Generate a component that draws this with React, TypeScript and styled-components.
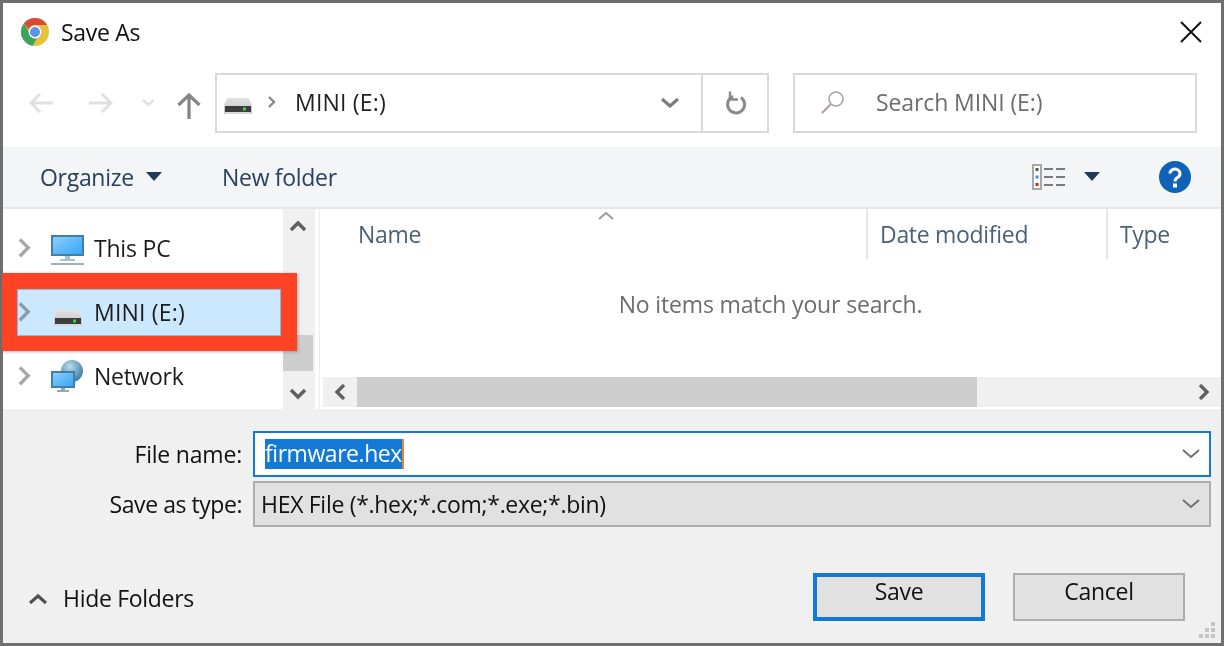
import React from "react";
import styled, { createGlobalStyle } from "styled-components";

const GlobalStyle = createGlobalStyle`
    html, body {
        margin: 0;
        padding: 0;
        background: #fff;
    }
    body {
        font-family: "Open Sans", "Liberation Sans", sans-serif;
    }
`;

const Window = styled.div`
    position: relative;
    box-sizing: border-box;
    width: 1224px;
    height: 646px;
    border: 3px solid #6f6f6f;
    background: #f0f0f0;
    display: flex;
    flex-direction: column;
    font-size: 23px;
    filter: blur(0.35px);
`;

const TitleBar = styled.div`
    height: 57px;
    flex: none;
    background: #fff;
    display: flex;
    align-items: center;
    padding: 0 19px 0 18px;
    gap: 12px;
`;

const Title = styled.div`
    flex: 1;
    color: #111;
    letter-spacing: -0.3px;
`;

const AddressRow = styled.div`
    height: 87px;
    flex: none;
    box-sizing: border-box;
    background: #fff;
    display: flex;
    align-items: flex-start;
    padding: 13px 24px 0 26px;
`;

const NavButtons = styled.div`
    width: 186px;
    height: 60px;
    flex: none;
    display: flex;
    align-items: center;
`;

const NavIcon = styled.svg<{ $gap: number; $drop?: number }>`
    flex: none;
    margin-right: ${(p) => p.$gap}px;
    margin-top: ${(p) => p.$drop ?? 0}px;
`;

const AddressBox = styled.div`
    box-sizing: border-box;
    width: 554px;
    height: 60px;
    flex: none;
    border: 2px solid #d9d9d9;
    display: flex;
    align-items: center;
    padding-left: 7px;
`;

const Crumb = styled.div`
    flex: 1;
    display: flex;
    align-items: center;
    color: #222;
    letter-spacing: 0.2px;
    padding-bottom: 2px;
`;

const CrumbDrive = styled.div`
    display: flex;
    margin-top: 8px;
`;

const CrumbChevron = styled.svg`
    margin: 0 18px 0 15px;
`;

const DropButton = styled.div`
    width: 62px;
    align-self: stretch;
    box-sizing: border-box;
    display: flex;
    align-items: center;
    justify-content: center;
`;

const RefreshButton = styled.div`
    width: 66px;
    align-self: stretch;
    box-sizing: border-box;
    border-left: 2px solid #d9d9d9;
    padding-left: 2px;
    display: flex;
    align-items: center;
    justify-content: center;
`;

const SearchBox = styled.div`
    box-sizing: border-box;
    width: 404px;
    height: 60px;
    flex: none;
    margin-left: 24px;
    border: 2px solid #d9d9d9;
    display: flex;
    align-items: center;
    gap: 31px;
    padding: 0 0 2px 26px;
    color: #6d6d6d;
    letter-spacing: -0.1px;
`;

const Toolbar = styled.div`
    height: 62px;
    flex: none;
    box-sizing: border-box;
    background: #f4f5f7;
    border-bottom: 2px solid #e6e6e6;
    display: flex;
    align-items: center;
    padding: 0 30px 1px 37px;
    color: #2a4060;
    letter-spacing: -0.3px;
`;

const ToolbarItem = styled.div<{ $width: number }>`
    width: ${(p) => p.$width}px;
    flex: none;
    display: flex;
    align-items: center;
    gap: 12px;
`;

const Spacer = styled.div`
    flex: 1;
`;

const ViewIcon = styled.svg`
    margin-right: 18px;
`;

const HelpIcon = styled.svg`
    margin-left: 59px;
`;

const Browser = styled.div`
    height: 200px;
    flex: none;
    display: flex;
    background: #fff;
`;

const NavPane = styled.div`
    width: 280px;
    flex: none;
    box-sizing: border-box;
    padding-top: 7px;
    display: flex;
    flex-direction: column;
`;

const NavRow = styled.div<{ $selected?: boolean }>`
    height: 64px;
    flex: none;
    box-sizing: border-box;
    display: flex;
    align-items: center;
    padding-left: 14px;
    color: #1c1c1c;
    background: ${(p) => (p.$selected ? "#cce8ff" : "transparent")};
`;

const NavChevron = styled.svg`
    flex: none;
    margin-right: 20px;
`;

const NavIconSlot = styled.div<{ $drop?: number }>`
    width: 33px;
    flex: none;
    display: flex;
    justify-content: center;
    margin-top: ${(p) => p.$drop ?? 0}px;
`;

const NavLabel = styled.span<{ $spacing?: number }>`
    margin-left: 10px;
    letter-spacing: ${(p) => p.$spacing ?? -0.2}px;
`;

const NavScroll = styled.div`
    width: 32px;
    flex: none;
    background: #f0f0f0;
    display: flex;
    flex-direction: column;
    align-items: center;
    justify-content: space-between;
    position: relative;
    padding: 11px 2px 9px 0;
    box-sizing: border-box;
`;

const NavThumb = styled.div`
    position: absolute;
    top: 126px;
    left: 0;
    width: 30px;
    height: 36px;
    background: #cdcdcd;
`;

const Splitter = styled.div`
    width: 5px;
    flex: none;
    box-sizing: border-box;
    border-right: 1px solid #ececec;
`;

const ListPane = styled.div`
    flex: 1;
    min-width: 0;
    display: flex;
    flex-direction: column;
    padding-left: 3px;
`;

const HeaderRow = styled.div`
    height: 50px;
    flex: none;
    display: flex;
    position: relative;
    color: #4c607a;
    letter-spacing: -0.3px;
    overflow: hidden;
`;

const SortCaret = styled.svg`
    position: absolute;
    left: 275px;
    top: 2px;
`;

const HeaderCell = styled.div<{ $width: number; $first?: boolean; $last?: boolean }>`
    width: ${(p) => p.$width}px;
    flex: none;
    box-sizing: border-box;
    padding-left: ${(p) => (p.$first ? 35 : 12)}px;
    padding-top: 9px;
    border-right: ${(p) => (p.$last ? "none" : "2px solid #e5e5e5")};
`;

const EmptyText = styled.div`
    flex: 1;
    text-align: center;
    color: #6d6d6d;
    padding-top: 29px;
    padding-right: 3px;
    letter-spacing: -0.15px;
`;

const HScroll = styled.div`
    height: 30px;
    flex: none;
    margin-bottom: 2px;
    background: #f0f0f0;
    display: flex;
    align-items: center;
`;

const HButton = styled.div`
    width: 34px;
    flex: none;
    display: flex;
    align-items: center;
    justify-content: center;
`;

const HThumb = styled.div`
    width: 620px;
    height: 30px;
    flex: none;
    background: #cdcdcd;
`;

const HTrack = styled.div`
    flex: 1;
`;

const Highlight = styled.div`
    position: absolute;
    left: -1px;
    top: 270px;
    width: 295px;
    height: 78px;
    box-sizing: border-box;
    border-style: solid;
    border-color: #ff4324;
    border-width: 16px 16px 15px 15px;
    box-shadow: 1px 1px 3px rgba(0, 0, 0, 0.25);

    &::after {
        content: "";
        position: absolute;
        inset: 0;
        border: 1px solid #8ab9e2;
    }
`;

const Form = styled.div`
    flex: 1;
    display: flex;
    flex-direction: column;
    padding: 22px 10px 0 0;
`;

const FieldRow = styled.div`
    display: flex;
    align-items: center;
    margin-bottom: 4px;
    color: #111;
    letter-spacing: -0.3px;
`;

const FieldLabel = styled.div<{ $spacing?: number }>`
    width: 239px;
    flex: none;
    text-align: right;
    margin-right: 11px;
    letter-spacing: ${(p) => p.$spacing ?? -0.2}px;
`;

const Field = styled.div<{ $active?: boolean }>`
    flex: 1;
    box-sizing: border-box;
    height: 46px;
    display: flex;
    align-items: center;
    justify-content: space-between;
    padding: 0 9px 0 ${(p) => (p.$active ? 10 : 6)}px;
    border: 2px solid ${(p) => (p.$active ? "#1279d6" : "#adadad")};
    background: ${(p) => (p.$active ? "#fff" : "#e1e1e1")};
`;

const SelectedText = styled.span`
    background: #1279d6;
    color: #fff;
    height: 30px;
    line-height: 29px;
    letter-spacing: -0.45px;
    border-right: 2px solid #f08030;
`;

const Footer = styled.div`
    display: flex;
    align-items: center;
    margin-top: 42px;
    padding-left: 26px;
    padding-right: 26px;
`;

const HideFolders = styled.div`
    flex: 1;
    display: flex;
    align-items: center;
    gap: 16px;
    padding-top: 2px;
    color: #111;
    letter-spacing: -0.3px;
`;

const Button = styled.div<{ $primary?: boolean }>`
    box-sizing: border-box;
    width: 172px;
    height: 48px;
    margin-left: 28px;
    display: flex;
    align-items: center;
    justify-content: center;
    padding-bottom: 12px;
    background: #e1e1e1;
    color: #111;
    letter-spacing: -0.3px;
    border: ${(p) => (p.$primary ? "4px solid #1279d6" : "2px solid #adadad")};
`;

const Grip = styled.svg`
    position: absolute;
    right: 6px;
    bottom: 5px;
`;

const ChromeIcon = () => (
    <svg width="28" height="28" viewBox="0 0 28 28">
        <circle cx="14" cy="14" r="14" fill="#e2c33a" />
        <path d="M14 0a14 14 0 0 1 12.1 7H14a7 7 0 0 0-6.400 4.200L2.900 5.500A14 14 0 0 1 14 0z" fill="#d8493c" />
        <path d="M2.900 5.500l5.600 9.600a6.800 6.800 0 0 0 7.300 5.600L11.500 27.800A14 14 0 0 1 2.900 5.500z" fill="#3ba45c" />
        <circle cx="14" cy="14" r="6.400" fill="#fff" />
        <circle cx="14" cy="14" r="5" fill="#5b92ea" />
    </svg>
);

const DriveIcon = () => (
    <svg width="28" height="16" viewBox="0 0 28 16">
        <defs>
            <linearGradient id="driveTop" x1="0" y1="0" x2="0" y2="1">
                <stop offset="0" stopColor="#e2e2e2" />
                <stop offset="1" stopColor="#c4c4c4" />
            </linearGradient>
        </defs>
        <path d="M5 0h18q1.500 0 2 1l3 6v9H0V7l3-6q.5-1 2-1z" fill="url(#driveTop)" />
        <rect x="1" y="8" width="26" height="6" fill="#3d3d3d" />
        <rect x="1" y="14" width="26" height="2" fill="#d9d9d9" />
        <rect x="19" y="9.500" width="3" height="3" fill="#3fd04a" />
    </svg>
);

const PcIcon = () => (
    <svg width="33" height="30" viewBox="0 0 33 30">
        <defs>
            <linearGradient id="pcScreen" x1="0" y1="0" x2="1" y2="1">
                <stop offset="0" stopColor="#8fd0fb" />
                <stop offset="1" stopColor="#34a4f5" />
            </linearGradient>
        </defs>
        <rect x="1" y="1" width="31" height="19" fill="url(#pcScreen)" stroke="#3f7fa8" strokeWidth="2" />
        <rect x="14" y="21" width="5" height="3" fill="#a8c0d0" />
        <rect x="9" y="24" width="15" height="2" fill="#a8c0d0" />
        <rect x="0" y="28" width="33" height="2" fill="#9fb0bd" />
    </svg>
);

const NetworkIcon = () => (
    <svg width="33" height="32" viewBox="0 0 33 32">
        <defs>
            <radialGradient id="globe" cx="0.4" cy="0.3" r="0.8">
                <stop offset="0" stopColor="#b9dcec" />
                <stop offset="1" stopColor="#2f6f96" />
            </radialGradient>
            <linearGradient id="netScreen" x1="0" y1="0" x2="1" y2="1">
                <stop offset="0" stopColor="#8fd0fb" />
                <stop offset="1" stopColor="#34a4f5" />
            </linearGradient>
        </defs>
        <circle cx="21" cy="11" r="11" fill="url(#globe)" />
        <rect x="1" y="12" width="22" height="15" fill="url(#netScreen)" stroke="#3f7fa8" strokeWidth="2" />
        <rect x="10" y="28" width="4" height="2" fill="#8fa8b8" />
        <rect x="6" y="30" width="12" height="2" fill="#8fa8b8" />
    </svg>
);

const Chevron = ({ color = "#a6a6a6" }: { color?: string }) => (
    <NavChevron width={14} height={19.6} viewBox="0 0 10 14">
        <path d="M2 1l6 6-6 6" fill="none" stroke={color} strokeWidth="2.4" />
    </NavChevron>
);

const DownChevron = () => (
    <svg width="18" height="10" viewBox="0 0 18 10">
        <path d="M1 1l8 7 8-7" fill="none" stroke="#707070" strokeWidth="2" />
    </svg>
);

const Caret = () => (
    <svg width="16" height="9" viewBox="0 0 16 9">
        <path d="M0 0h16l-8 9z" fill="#22395a" />
    </svg>
);

const ThickChevron = ({ dir }: { dir: "up" | "down" | "left" | "right" }) => {
    const paths = {
        up: "M1 10l7-7 7 7",
        down: "M1 2l7 7 7-7",
        left: "M10 1l-7 7 7 7",
        right: "M2 1l7 7-7 7",
    };
    const wide = dir === "up" || dir === "down";
    return (
        <svg width={wide ? 16 : 12} height={wide ? 12 : 16} viewBox={wide ? "0 0 16 12" : "0 0 12 16"}>
            <path d={paths[dir]} fill="none" stroke="#606060" strokeWidth="3.4" />
        </svg>
    );
};

const App = () => {
    return (
        <>
            <GlobalStyle />
            <Window>
                <TitleBar>
                    <ChromeIcon />
                    <Title>Save As</Title>
                    <svg width="22" height="22" viewBox="0 0 22 22">
                        <path d="M1 1l20 20M21 1L1 21" stroke="#111" strokeWidth="2" />
                    </svg>
                </TitleBar>
                <AddressRow>
                    <NavButtons>
                        <NavIcon $gap={36} width="24" height="20" viewBox="0 0 24 20">
                            <path d="M11 1l-9 9 9 9M2 10h22" fill="none" stroke="#e0e0e0" strokeWidth="3" />
                        </NavIcon>
                        <NavIcon $gap={29} width="24" height="20" viewBox="0 0 24 20">
                            <path d="M13 1l9 9-9 9M22 10H0" fill="none" stroke="#e0e0e0" strokeWidth="3" />
                        </NavIcon>
                        <NavIcon $gap={22} width="13" height="8" viewBox="0 0 13 8">
                            <path d="M1 1l5.500 5 5.500-5" fill="none" stroke="#e0e0e0" strokeWidth="2.4" />
                        </NavIcon>
                        <NavIcon $gap={0} $drop={5} width="24" height="26" viewBox="0 0 24 26">
                            <path d="M1.500 12L12 2l10.500 10M12 2v24" fill="none" stroke="#858585" strokeWidth="3.2" />
                        </NavIcon>
                    </NavButtons>
                    <AddressBox>
                        <Crumb>
                            <CrumbDrive><DriveIcon /></CrumbDrive>
                            <CrumbChevron width="10" height="12" viewBox="0 0 10 12">
                                <path d="M2 1l5 5-5 5" fill="none" stroke="#8a8a8a" strokeWidth="2.4" />
                            </CrumbChevron>
                            MINI (E:)
                        </Crumb>
                        <DropButton>
                            <svg width="18" height="10" viewBox="0 0 18 10">
                                <path d="M1 1l8 7 8-7" fill="none" stroke="#7b7b7b" strokeWidth="3.2" />
                            </svg>
                        </DropButton>
                        <RefreshButton>
                            <svg width="22" height="24" viewBox="0 0 22 24">
                                <path d="M8 5.500a8.500 8.500 0 1 0 8 1" fill="none" stroke="#8a8a8a" strokeWidth="3" />
                                <path d="M5 0.500v8h8" fill="none" stroke="#8a8a8a" strokeWidth="2.400" />
                            </svg>
                        </RefreshButton>
                    </AddressBox>
                    <SearchBox>
                        <svg width="24" height="24" viewBox="0 0 24 24">
                            <circle cx="15" cy="9" r="7" fill="none" stroke="#a9a4a8" strokeWidth="1.6" />
                            <path d="M10 14l-9 9" stroke="#b09aa8" strokeWidth="2" />
                        </svg>
                        Search MINI (E:)
                    </SearchBox>
                </AddressRow>
                <Toolbar>
                    <ToolbarItem $width={182}>
                        Organize
                        <Caret />
                    </ToolbarItem>
                    <ToolbarItem $width={140}>New folder</ToolbarItem>
                    <Spacer />
                    <ViewIcon width="34" height="26" viewBox="0 0 34 26">
                        <rect x="1" y="1" width="8" height="24" fill="#fff" stroke="#a8a8a8" strokeWidth="2" />
                        <rect x="3.500" y="4" width="3" height="3" fill="#555" />
                        <rect x="3.500" y="11.500" width="3" height="3" fill="#4a8df0" />
                        <rect x="3.500" y="19" width="3" height="3" fill="#e02020" />
                        <path d="M12 5h9M24 5h9M12 13h9M24 13h9M12 21h9M24 21h9" stroke="#7a7a7a" strokeWidth="2" />
                    </ViewIcon>
                    <Caret />
                    <HelpIcon width="32" height="32" viewBox="0 0 32 32">
                        <circle cx="16" cy="16" r="16" fill="#0f62b5" />
                        <path d="M11 12.500a5 4.500 0 1 1 7.500 4c-1.800 1-2.500 1.800-2.500 4" fill="none" stroke="#fff" strokeWidth="3" />
                        <rect x="14" y="22.500" width="4" height="4" fill="#fff" />
                    </HelpIcon>
                </Toolbar>
                <Browser>
                    <NavPane>
                        <NavRow>
                            <Chevron />
                            <NavIconSlot $drop={4}><PcIcon /></NavIconSlot>
                            <NavLabel>This PC</NavLabel>
                        </NavRow>
                        <NavRow $selected>
                            <Chevron color="#8d9aa8" />
                            <NavIconSlot $drop={12}><DriveIcon /></NavIconSlot>
                            <NavLabel $spacing={0.2}>MINI (E:)</NavLabel>
                        </NavRow>
                        <NavRow>
                            <Chevron />
                            <NavIconSlot><NetworkIcon /></NavIconSlot>
                            <NavLabel $spacing={-0.3}>Network</NavLabel>
                        </NavRow>
                    </NavPane>
                    <NavScroll>
                        <NavThumb />
                        <ThickChevron dir="up" />
                        <ThickChevron dir="down" />
                    </NavScroll>
                    <Splitter />
                    <ListPane>
                        <HeaderRow>
                            <SortCaret width="16" height="9" viewBox="0 0 16 9">
                                <path d="M1 8l7-6 7 6" fill="none" stroke="#9a9a9a" strokeWidth="2" />
                            </SortCaret>
                            <HeaderCell $width={545} $first>Name</HeaderCell>
                            <HeaderCell $width={240}>Date modified</HeaderCell>
                            <HeaderCell $width={110} $last>Type</HeaderCell>
                        </HeaderRow>
                        <EmptyText>No items match your search.</EmptyText>
                        <HScroll>
                            <HButton><ThickChevron dir="left" /></HButton>
                            <HThumb />
                            <HTrack />
                            <HButton><ThickChevron dir="right" /></HButton>
                        </HScroll>
                    </ListPane>
                </Browser>
                <Form>
                    <FieldRow>
                        <FieldLabel>File name:</FieldLabel>
                        <Field $active>
                            <SelectedText>firmware.hex</SelectedText>
                            <DownChevron />
                        </Field>
                    </FieldRow>
                    <FieldRow>
                        <FieldLabel $spacing={-0.45}>Save as type:</FieldLabel>
                        <Field>
                            <span>HEX File (*.hex;*.com;*.exe;*.bin)</span>
                            <DownChevron />
                        </Field>
                    </FieldRow>
                    <Footer>
                        <HideFolders>
                            <svg width="18" height="11" viewBox="0 0 18 11">
                                <path d="M1 10l8-7 8 7" fill="none" stroke="#505050" strokeWidth="3.2" />
                            </svg>
                            Hide Folders
                        </HideFolders>
                        <Button $primary>Save</Button>
                        <Button>Cancel</Button>
                    </Footer>
                </Form>
                <Highlight />
                <Grip width="16" height="16" viewBox="0 0 16 16" fill="#c4c4c4">
                    <rect x="12" y="0" width="4" height="4" />
                    <rect x="6" y="6" width="4" height="4" />
                    <rect x="12" y="6" width="4" height="4" />
                    <rect x="0" y="12" width="4" height="4" />
                    <rect x="6" y="12" width="4" height="4" />
                    <rect x="12" y="12" width="4" height="4" />
                </Grip>
            </Window>
        </>
    );
};

export default App;
